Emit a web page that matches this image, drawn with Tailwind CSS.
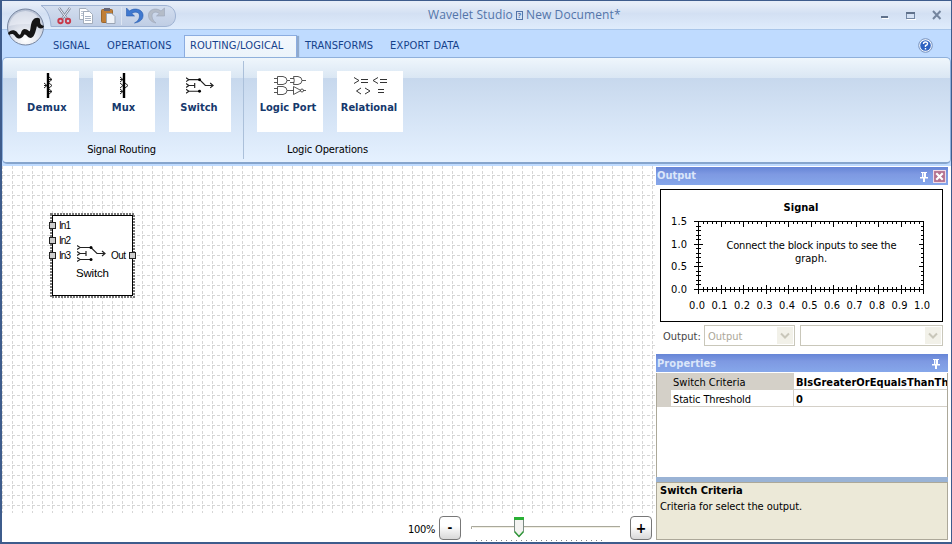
<!DOCTYPE html>
<html lang="en"><head><meta charset="utf-8"><title>Wavelet Studio</title>
<script src="https://cdn.jsdelivr.net/npm/@tailwindcss/browser@4"></script></head>
<body class="w-[952px] h-[544px] overflow-hidden font-['DejaVu_Sans_Condensed','DejaVu_Sans',sans-serif] [font-stretch:condensed] text-[11px] leading-[14px] text-black">
<svg class="hidden">
 <symbol id="switch" viewBox="0 0 30 18"><path d="M2 3.500H14L20 9.500H28M2 9.500H9M9 7V12M2 15.500H14M0 1.500L3 3.500L0 5.500M0 7.500L3 9.500L0 11.500M0 13.500L3 15.500L0 17.500M25 7L28 9.500L25 12" fill="none" stroke="#222" stroke-width="1.2"/><circle cx="14" cy="3.500" r="1.500"/><circle cx="14" cy="15.500" r="1.500"/></symbol>
 <symbol id="pin" viewBox="0 0 8 10"><path d="M1 0H7V1H6V5H8V6.500H5V10H3V6.500H0V5H2V1H1Z" fill="#fff"/><path d="M3.500 1V5" stroke="#a9bff0"/></symbol>
</svg>
<div class="flex flex-col w-[952px] h-[544px] border-l-2 border-r border-t border-b-2 border-[#3e5c8c] bg-[#bfdbff]">
 <header class="relative h-[29px] shrink-0 flex border-b border-[#a9c6ea] bg-linear-to-b from-[#e6edf8] from-10% via-[#d3e0f3] via-45% to-[#dfecfc]">
  <div class="relative ml-[38px] mt-[4px] w-[136px] h-[22px] flex items-center pl-[16px]">
   <svg class="absolute left-0 top-0 w-[136px] h-[22px]" viewBox="0 0 136 22"><defs><linearGradient id="qat" x1="0" y1="0" x2="0" y2="1"><stop offset="0" stop-color="#d3deef"/><stop offset="1" stop-color="#bfcde4"/></linearGradient></defs><path d="M1 .5H125C131.500 .5 135.500 5 135.500 11C135.500 17 131.500 21.500 125 21.500H11C10.500 12 7 4 1 .5Z" fill="url(#qat)" stroke="#9fb3d3"/></svg>
   <svg class="relative w-[120px] h-[20px]" viewBox="0 0 120 20" fill="none">
    <path d="M3 2L11 13M14 2L6 13" stroke="#7f8997" stroke-width="2.400"/><path d="M3 2L11 13M14 2L6 13" stroke="#eef" stroke-width="1"/><circle cx="4.500" cy="15" r="2.200" stroke="#c83a4b" stroke-width="1.900"/><circle cx="12" cy="15" r="2.200" stroke="#c83a4b" stroke-width="1.900"/>
    <path d="M23.500 2.500H30L32.500 5V13.500H23.500Z" fill="#fff" stroke="#a3adbb"/><path d="M25 5.500H30M25 7.500H28M25 9.500H28" stroke="#bcc5d2"/><path d="M27.500 5.500H33.500L36.500 8.500V17.500H27.500Z" fill="#fff" stroke="#a3adbb"/><path d="M29 10.500H35M29 12.500H35M29 14.500H35" stroke="#aab5c5"/>
    <rect x="45.500" y="3.500" width="11" height="13" rx="1" fill="#c07f38" stroke="#9a672f"/><rect x="48" y="2" width="6" height="3" fill="#667"/><path d="M50.500 7.500H56L59 10.500V17.500H50.500Z" fill="#eef2f8" stroke="#9aa5b5"/>
    <path d="M65.500 1V19" stroke="#dde6f3"/>
    <path d="M70.500 2V10H78.500L75.700 7.500C79.500 5 83.500 6 83.500 10C83.500 13 81.500 15.500 78.500 17C84.500 16 87.500 13 87 8.500C86.500 3.500 78.500 1 73.500 5Z" fill="#3f78cf" stroke="#285cae" stroke-width=".6"/>
    <path d="M108.500 2V10H100.500L103.300 7.500C100 5 96 6 96 10C96 13 98 15.500 100 17C95 16 92 13 92.500 8.500C93 3.500 100 1 105 5Z" fill="#b4bcc8" stroke="#9aa5b8" stroke-width=".6"/>
   </svg>
  </div>
  <div class="ml-[252px] mt-[5px] font-['Open_Sans','Noto_Sans',sans-serif] [font-stretch:normal] text-[12px] leading-[18px] text-[#5375a9] whitespace-nowrap flex"><span class="w-[85px] tracking-[0.1px]">Wavelet Studio</span><span class="inline-flex w-[7px] h-[9px] mt-[5px] ml-[3px] mr-[3px] border border-[#5375a9] text-[7px] leading-[7px] justify-center font-bold">?</span><span class="tracking-[0.1px]">New Document*</span></div>
  <svg class="ml-auto mr-[8px] mt-[7px] w-[62px] h-[14px]" viewBox="0 0 62 14" fill="none"><path d="M0 9H7" stroke="#60728c" stroke-width="2"/><path d="M1 10.500H8M26 11.500H35" stroke="#fff"/><rect x="25.500" y="4.500" width="8" height="6" stroke="#7387a3"/><path d="M25 5H34" stroke="#60728c" stroke-width="2"/><path d="M52 3L59.500 11M59.500 3L52 11" stroke="#74859e" stroke-width="2"/></svg>
  <svg class="absolute left-[4px] top-[7px] w-[40px] h-[40px]" viewBox="0 0 40 40"><defs><radialGradient id="orb" cx=".5" cy=".85" r=".9"><stop offset="0" stop-color="#fff"/><stop offset=".5" stop-color="#d8dde8"/><stop offset="1" stop-color="#aeb9ce"/></radialGradient></defs><circle cx="19.500" cy="19" r="18" fill="url(#orb)" stroke="#76859f"/><path d="M3 18Q19 14 36 18Q33 4 19.500 3Q6 4 3 18Z" fill="#f5f8fd" opacity=".5"/><path d="M2 25C4 22 8 21 11 24C13 27 14 28 15 25C16 20 20 20 23 23C25 25 24 15 27 12C29 9 34 9 34 12C34 16 35 17 38 18L37 20C34 21 32 20 31 18C30 21 29 29 25 30C21 30 20 25 18 27C16 31 12 32 9 28C7 25 5 26 3 27Z" fill="#151515"/></svg>
 </header>
 <nav class="h-[27px] shrink-0 relative z-1 flex text-[#15428b] leading-[20px]">
  <div class="w-[182px] pt-[6px] flex"><span class="ml-[51px] w-[54px]">SIGNAL</span><span class="tracking-[0.2px]">OPERATIONS</span></div>
  <div class="w-[113px] h-[28px] mt-[5px] pl-[5px] border border-b-0 border-[#8bace0] bg-linear-to-b from-[#f2f7fd] to-[#eaf3fa] whitespace-nowrap shadow-[2px_1px_1px_#8fa9cc] [clip-path:inset(0_-4px_6px_0)] tracking-[0.1px]">ROUTING/LOGICAL</div>
  <div class="pt-[6px] flex whitespace-nowrap"><span class="ml-[8px] w-[85px]">TRANSFORMS</span><span class="tracking-[0.2px]">EXPORT DATA</span></div>
  <svg class="ml-auto mr-[18px] mt-[8px] w-[15px] h-[15px]" viewBox="0 0 15 15"><circle cx="7.500" cy="7.500" r="6.800" fill="#f3f8ff" stroke="#7791bc"/><circle cx="7.500" cy="7.500" r="5.300" fill="#2e62c1"/><path d="M5.500 6Q5.500 4 7.500 4Q9.700 4 9.500 5.800Q9.300 7 7.500 7.500V9M7.500 10V11.500" fill="none" stroke="#fff" stroke-width="1.400"/></svg>
 </nav>
 <section class="h-[107px] shrink-0 flex border border-b-2 border-[#8fb0db] border-b-[#86a5cd] rounded-[5px] bg-linear-to-b from-[#eff6fc] from-0% via-[#d9e6f3] via-20% to-[#e4f0fd] relative overflow-hidden">
  <div class="absolute inset-x-0 top-[20px] bottom-0 bg-linear-to-b from-[#c7d8ed] to-[#e5f1ff]"></div>
  <div class="relative w-[241px] my-[3px] border-r border-[#abc0da] flex flex-col">
   <div class="flex gap-[14px] pl-[14px] pt-[10px] text-[#15386c] font-bold text-center leading-[14px]">
    <div class="w-[62px] h-[61px] bg-white"><svg class="w-[12px] h-[26px] mx-auto mt-[2px] mb-[2px]" viewBox="0 0 12 26" fill="none" stroke="#222"><path d="M6 0V25" stroke="#000" stroke-width="2.400"/><path d="M7 4L10 6.500L7 9M7 10L10 12.500L7 15M7 16L10 18.500L7 21M2 10L5 12.500L2 15M2 12.500H5M7 6.500H10M7 18.500H10"/></svg><span class="tracking-[0.25px] mr-[2px]">Demux</span></div>
    <div class="w-[62px] h-[61px] bg-white"><svg class="w-[12px] h-[26px] mx-auto mt-[2px] mb-[2px]" viewBox="0 0 12 26" fill="none" stroke="#222"><path d="M6 0V25" stroke="#000" stroke-width="2.400"/><path d="M2 4L5 6.500L2 9M2 10L5 12.500L2 15M2 16L5 18.500L2 21M7 10L10 12.500L7 15M2 6.500H5M2 18.500H5"/></svg><span class="mr-[1px]">Mux</span></div>
    <div class="w-[62px] h-[61px] bg-white"><svg class="w-[29px] h-[18px] mx-auto mt-[5px] mb-[7px]"><use href="#switch"/></svg><span class="mr-[2px]">Switch</span></div>
   </div>
   <div class="text-center mt-[11px] pr-[3px] tracking-[-0.2px]">Signal Routing</div>
  </div>
  <div class="relative w-[170px] pt-[13px]">
   <div class="flex gap-[14px] pl-[13px] text-[#15386c] font-bold text-center leading-[14px]">
    <div class="w-[66px] h-[61px] bg-white"><svg class="w-[32px] h-[20px] mx-auto mt-[4px] mb-[6px]" viewBox="0 0 32 20" fill="none" stroke="#444" stroke-width=".9"><path d="M3.500 1.500H9Q13 2 13 5.500Q13 9 9 9.500H3.500ZM0 3.500H3.500M0 7.500H3.500M13 5.500H16M19.500 1.500H24Q28 2 28 5.500Q28 9 24 9.500H19.500Q21 5.500 19.500 1.500ZM16 3.500H20M16 7.500H20M28 5.500H32M3.500 11.500H9Q13 12 13 15.500Q13 19 9 19.500H3.500ZM0 13.500H3.500M0 17.500H3.500M13 15.500H19.500M19.500 11.500L27 15.500L19.500 19.500ZM29 15.500H32"/><circle cx="28" cy="15.500" r="1.500"/></svg><span class="mr-[4px]">Logic Port</span></div>
    <div class="w-[66px] h-[61px] bg-white"><svg class="w-[34px] h-[20px] mx-auto mt-[4px] mb-[6px]" viewBox="0 0 34 20" fill="none" stroke="#333"><path d="M1 2.500L6 5.500L1 8.500M8 4.500H15M8 7.500H15M25 2.500L20 5.500L25 8.500M27 4.500H34M27 7.500H34M8 13L3.500 16L8 19M12 13L17 16L12 19M25 14.500H31M25 17.500H31"/></svg><span class="mr-[2px]">Relational</span></div>
   </div>
   <div class="mt-[11px] text-center pr-[3px] tracking-[-0.15px]">Logic Operations</div>
  </div>
 </section>
 <div class="h-[2px] shrink-0 bg-[#bfdbff]"></div>
 <main class="flex flex-1 min-h-0 bg-white">
  <section class="relative w-[654px] shrink-0 flex flex-col bg-white">
   <svg class="w-[653px] h-[347px] shrink-0"><defs><pattern id="grid" width="10" height="10" patternUnits="userSpaceOnUse"><path d="M0 9.500H10" stroke="#d6d6d6" stroke-dasharray="3 2"/><path d="M.5 0V10" stroke="#d6d6d6" stroke-dasharray="3 2"/></pattern></defs><rect width="653" height="347" fill="url(#grid)"/></svg>
   <div class="flex h-[29px] pl-[406px]">
    <span class="w-[31px] mt-[10px] text-[11px] tracking-[-0.3px]">100%</span>
    <button class="w-[22px] h-[24px] mt-[3px] border border-[#777] rounded-[4px] bg-linear-to-b from-white from-40% to-[#d8d8d8] font-bold text-[13px]">-</button>
    <svg class="w-[169px] h-[29px]" viewBox="1 0 169 29"><path d="M11.500 16V13.500H160" fill="none" stroke="#a9a89c"/><path d="M13 14.500H160" stroke="#f1efe2"/><path d="M16 27.500H146" stroke="#888" stroke-dasharray="1 4"/><path d="M54.500 4.500H63.500V18.500L59 23.500L54.500 18.500Z" fill="#f3f3f1" stroke="#7b8b83"/><path d="M54 5.500H64" stroke="#2ab035" stroke-width="3"/><path d="M54.500 18.500L59 23.500L63.500 18.500" fill="none" stroke="#31983a" stroke-width="1.500"/></svg>
    <button class="w-[22px] h-[24px] mt-[3px] border border-[#777] rounded-[4px] bg-linear-to-b from-white from-40% to-[#d8d8d8] font-bold text-[14px]">+</button>
   </div>
   <svg class="absolute left-[47px] top-[47px] w-[88px] h-[86px]" viewBox="0 0 88 86" font-family="'Liberation Sans',sans-serif" font-size="10"><rect x="2" y="1" width="83" height="83" fill="#fff" stroke="#777" stroke-width="2" stroke-dasharray="2 1"/><rect x="3.500" y="2.500" width="80" height="80" fill="#fff" stroke="#000"/><g fill="#ccc" stroke="#222"><rect x=".5" y="9.500" width="6" height="6"/><rect x=".5" y="24.500" width="6" height="6"/><rect x=".5" y="39.500" width="6" height="6"/><rect x="80.500" y="39.500" width="6" height="6"/></g><text x="10" y="16" textLength="12">In1</text><text x="10" y="31" textLength="12">In2</text><text x="10" y="46" textLength="12">In3</text><text x="62" y="46" textLength="15">Out</text><text x="27" y="64" font-size="11.500" textLength="33">Switch</text><use href="#switch" x="28" y="31" width="30" height="18"/></svg>
  </section>
  <aside class="w-[292px] flex flex-col pt-[1px] pb-[2px]">
   <div class="h-[18px] shrink-0 flex items-center px-[1px] bg-linear-to-b from-[#6685d6] via-[#7e99e2] via-40% to-[#86a7ea] text-[#dbe6fa] font-bold">Output<svg class="ml-auto mr-[5px] mt-[2px] w-[8px] h-[10px]"><use href="#pin"/></svg><svg class="mr-px mt-px w-[13px] h-[13px]" viewBox="0 0 12 12"><rect x=".5" y=".5" width="11" height="11" fill="#b4718f" stroke="#f1dbe6"/><path d="M3 3L9 9M9 3L3 9" stroke="#fff" stroke-width="2"/></svg></div>
   <svg class="mt-[4px] ml-[4px] w-[283px] h-[133px] shrink-0" viewBox="0 0 283 133" font-size="11" font-family="'DejaVu Sans Condensed','DejaVu Sans',sans-serif">
    <rect x=".5" y=".5" width="282" height="132" fill="#fff" stroke="#000"/>
    <text x="141" y="21.500" text-anchor="middle" font-weight="bold" textLength="35">Signal</text>
    <path d="M38.500 32V101M263.500 32V101M34 32.500H264M34 100.500H264" stroke="#000" fill="none"/>
    <g id="ticks" stroke="#000"></g>
    <g text-anchor="middle"><text x="151.500" y="59.500" textLength="170">Connect the block inputs to see the</text><text x="151" y="72.500">graph.</text></g>
    <g id="labels" text-anchor="middle"></g>
   </svg>
   <div class="h-[32px] shrink-0 flex items-start pt-[3px] pl-[7px]"><span class="w-[41px] mt-[5px] text-[#444]">Output:</span>
    <div class="w-[91px] h-[21px] border border-[#c9c7ba] flex items-center pl-[3px] text-[#aca899]"><span class="mt-[2px]">Output</span><svg class="ml-auto mr-px w-[16px] h-[17px]" viewBox="0 0 16 17"><rect width="16" height="17" fill="#f2f1e9"/><path d="M4 6.500L8 10.500L12 6.500" fill="none" stroke="#c9c7ba" stroke-width="2"/></svg></div>
    <div class="ml-[5px] w-[143px] h-[21px] border border-[#c9c7ba] flex items-center"><svg class="ml-auto mr-px w-[16px] h-[17px]" viewBox="0 0 16 17"><rect width="16" height="17" fill="#f2f1e9"/><path d="M4 6.500L8 10.500L12 6.500" fill="none" stroke="#c9c7ba" stroke-width="2"/></svg></div>
   </div>
   <div class="h-[18px] shrink-0 flex items-center px-[1px] bg-linear-to-b from-[#6685d6] via-[#7e99e2] via-40% to-[#86a7ea] text-[#dbe6fa] font-bold"><span class="mt-px tracking-[0.1px]">Properties</span><svg class="ml-auto mr-[7px] mt-px w-[8px] h-[10px]"><use href="#pin"/></svg></div>
   <div class="mt-px h-[104px] shrink-0 border-x border-[#aca899] leading-[19px]">
    <div class="flex h-[17px] bg-[#d4d0c8]"><span class="w-[136px] pl-[16px]">Switch Criteria</span><span class="flex-1 bg-white border-l border-b border-[#d4d0c8] pl-[2px] font-bold overflow-hidden whitespace-nowrap tracking-[0.05px]">BIsGreaterOrEqualsThanThreshold</span></div>
    <div class="flex h-[17px] bg-[#d4d0c8] pl-[14px]"><span class="w-[122px] pl-[2px] bg-white border-b border-[#d4d0c8] tracking-[-0.15px]">Static Threshold</span><span class="flex-1 bg-white border-l border-b border-[#d4d0c8] pl-[2px] font-bold">0</span></div>
   </div>
   <div class="h-[5px] shrink-0 bg-[#9ab3d5]"></div>
   <div class="flex-1 border border-[#aca899] bg-[#ece9d8] px-[3px] leading-[16px]"><div class="font-bold">Switch Criteria</div><div class="tracking-[-0.07px]">Criteria for select the output.</div></div>
  </aside>
 </main>
</div>
<script>
let d='';
for(let i=0;i<=50;i++){const x=38.5+i*4.5,m=i%5===0;d+=`M${x} ${32}v${m?6:3}M${x} ${m?96:98}v${m?9:5}`;}
for(let i=0;i<=15;i++){const y=100.5-i*4.533,m=i%5===0;d+=`M${m?34:36} ${y}h${m?9:5}M264 ${y}h${m?-5:-3}`;}
document.getElementById('ticks').innerHTML=`<path shape-rendering="crispEdges" d="${d}"/>`;
let t='';
for(let i=0;i<=10;i++)t+=`<text x="${37+i*22.5}" y="120" textLength="16">${(i/10).toFixed(1)}</text>`;
['1.5','1.0','0.5','0.0'].forEach((v,i)=>t+=`<text x="19" y="${36+i*22.7}" textLength="16">${v}</text>`);
document.getElementById('labels').innerHTML=t;
</script>
</body></html>
